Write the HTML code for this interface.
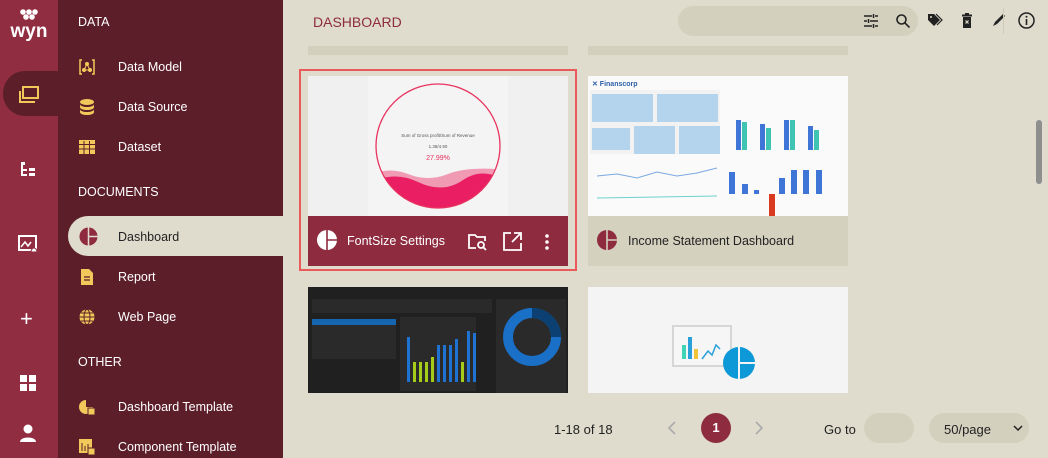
<!DOCTYPE html>
<html><head><meta charset="utf-8"><style>
*{margin:0;padding:0;box-sizing:border-box}
body{width:1048px;height:458px;overflow:hidden;background:#dfdccd;font-family:"Liberation Sans",sans-serif;position:relative}
.rail{position:absolute;left:0;top:0;width:58px;height:458px;background:#912d41}
.side{position:absolute;left:58px;top:0;width:225px;height:458px;background:#5c1f2a;color:#fff}
.sel{position:absolute;left:3px;top:71px;width:60px;height:45px;background:#5c1f2a;border-radius:22px 0 0 22px}
.hd{position:absolute;left:20px;font-size:12.5px;color:#fff}
.it{position:absolute;left:60px;font-size:12.5px;color:#fff}
.ic{position:absolute;left:20px;width:18px;height:18px}
.pill{position:absolute;left:68px;top:216px;width:215px;height:40px;background:#dfdccd;border-radius:20px 0 0 20px}
.abs{position:absolute}
</style></head><body>
<div class="rail">
 <svg class="abs" style="left:6px;top:8px" width="46" height="34" viewBox="0 0 46 34">
  <g fill="#fff"><circle cx="17" cy="4" r="2.8"/><circle cx="23" cy="4" r="2.8"/><circle cx="29" cy="4" r="2.8"/><circle cx="20" cy="9" r="2.8"/><circle cx="26" cy="9" r="2.8"/></g>
  <text x="23" y="29" text-anchor="middle" font-family="Liberation Sans" font-weight="bold" font-size="19" fill="#fff">wyn</text>
 </svg>
</div>
<div class="sel"></div>
<svg class="abs" style="left:18px;top:86px" width="22" height="18" viewBox="0 0 22 18"><rect x="5" y="1" width="15" height="11" fill="none" stroke="#f1c95b" stroke-width="2"/><path d="M2 5v11h15" fill="none" stroke="#f1c95b" stroke-width="2"/></svg>
<svg class="abs" style="left:21px;top:162px" width="16" height="16" viewBox="0 0 16 16" fill="#fff"><rect x="0" y="0" width="4" height="3"/><rect x="0" y="3" width="2" height="11"/><rect x="2" y="7" width="4" height="2"/><rect x="2" y="12" width="4" height="2"/><rect x="8" y="6" width="6" height="3"/><rect x="8" y="11" width="6" height="3"/></svg>
<svg class="abs" style="left:18px;top:235px" width="22" height="20" viewBox="0 0 22 20"><rect x="1" y="1" width="17" height="14" fill="none" stroke="#fff" stroke-width="2"/><path d="M3 12l4-5 3 4 3-4" fill="none" stroke="#fff" stroke-width="1.5"/><path d="M13 17a3 4 0 0 1 6 0z" fill="#fff" stroke="#912d41"/></svg>
<div class="abs" style="left:20px;top:307px;color:#fff;font-size:22px;line-height:24px">+</div>
<svg class="abs" style="left:20px;top:375px" width="16" height="16"><rect x="0" y="0" width="7" height="7" fill="#fff"/><rect x="9" y="0" width="7" height="7" fill="#fff"/><rect x="0" y="9" width="7" height="7" fill="#fff"/><rect x="9" y="9" width="7" height="7" fill="#fff"/></svg>
<svg class="abs" style="left:19px;top:424px" width="18" height="20"><circle cx="9" cy="5" r="4.5" fill="#fff"/><path d="M1 18c0-6 16-6 16 0z" fill="#fff"/></svg>

<div class="side">
 <div class="hd" style="top:15px">DATA</div>
 <div class="it" style="top:60px">Data Model</div>
 <div class="it" style="top:100px">Data Source</div>
 <div class="it" style="top:140px">Dataset</div>
 <div class="hd" style="top:185px">DOCUMENTS</div>
 <div class="it" style="top:270px">Report</div>
 <div class="it" style="top:310px">Web Page</div>
 <div class="hd" style="top:355px">OTHER</div>
 <div class="it" style="top:400px">Dashboard Template</div>
 <div class="it" style="top:440px">Component Template</div>
 <svg class="ic" style="top:58px" viewBox="0 0 18 18"><path d="M4 2H2v14h2M14 2h2v14h-2" fill="none" stroke="#f1c95b" stroke-width="1.5"/><circle cx="9" cy="6" r="2" fill="#f1c95b"/><circle cx="6" cy="12" r="2" fill="#f1c95b"/><circle cx="12" cy="12" r="2" fill="#f1c95b"/><path d="M9 6L6 12h6z" fill="none" stroke="#f1c95b"/></svg>
 <svg class="ic" style="top:98px" viewBox="0 0 18 18" fill="#f1c95b"><ellipse cx="9" cy="4" rx="7" ry="3"/><path d="M2 6c0 4 14 4 14 0v3c0 4-14 4-14 0zM2 11c0 4 14 4 14 0v3c0 4-14 4-14 0z"/></svg>
 <svg class="ic" style="top:138px" viewBox="0 0 18 18"><rect x="1" y="2" width="16" height="14" fill="#f1c95b"/><g stroke="#5c1f2a" stroke-width="1"><path d="M1 6.5h16M1 11h16M6 3v13M11.5 3v13"/></g></svg>
 <svg class="ic" style="top:268px" viewBox="0 0 18 18"><path d="M3 1h8l4 4v12H3z" fill="#f1c95b"/><path d="M6 9h6M6 12h6" stroke="#5c1f2a" stroke-width="1.3"/></svg>
 <svg class="ic" style="top:308px" viewBox="0 0 18 18"><circle cx="9" cy="9" r="7.5" fill="#f1c95b"/><g fill="none" stroke="#5c1f2a" stroke-width="1"><ellipse cx="9" cy="9" rx="3" ry="7.5"/><path d="M1.5 9h15M3 5h12M3 13h12"/></g></svg>
 <svg class="ic" style="top:398px" viewBox="0 0 18 18"><path d="M8 2a7 7 0 1 0 7 7H8z" fill="#f1c95b"/><rect x="10" y="10" width="7" height="7" fill="#f1c95b" stroke="#5c1f2a"/></svg>
 <svg class="ic" style="top:438px" viewBox="0 0 18 18"><rect x="1" y="1" width="13" height="14" fill="#f1c95b"/><path d="M4 5v8M7 8v5M10 6v7" stroke="#5c1f2a"/><rect x="10" y="10" width="7" height="7" fill="#f1c95b" stroke="#5c1f2a"/></svg>
</div>
<div class="pill"></div>
<svg class="abs" style="left:79px;top:227px" width="19" height="19" viewBox="0 0 20 20"><circle cx="10" cy="10" r="9.5" fill="#8e2b3f"/><path d="M10 0v20M10 10h10" stroke="#dfdccd" stroke-width="1.6"/></svg>
<div class="abs" style="left:118px;top:230px;font-size:12.5px;color:#222">Dashboard</div>

<!-- main -->
<div class="abs" style="left:313px;top:14px;font-size:14px;color:#8e2b3f">DASHBOARD</div>
<div class="abs" style="left:678px;top:6px;width:240px;height:30px;background:#d4d0be;border-radius:15px"></div>
<svg class="abs" style="left:864px;top:14px" width="14" height="14" viewBox="0 0 14 14" stroke="#222" stroke-width="1.5"><path d="M0 2h8M11 2h3M0 7h3M6 7h8M0 12h8M11 12h3M9.5 0v4M4.5 5v4M9.5 10v4"/></svg>
<svg class="abs" style="left:896px;top:14px" width="14" height="14" viewBox="0 0 14 14" fill="none" stroke="#222" stroke-width="1.6"><circle cx="5.5" cy="5.5" r="4.5"/><path d="M9 9l4.5 4.5"/></svg>
<svg class="abs" style="left:927px;top:13px" width="16" height="14" viewBox="0 0 16 14"><path d="M1 1h6l6 6-6 6-6-6z" fill="#222"/><path d="M9 1l6 6-5 5" fill="none" stroke="#222" stroke-width="1.2"/><circle cx="4" cy="4" r="1" fill="#dfdccd"/></svg>
<svg class="abs" style="left:961px;top:13px" width="12" height="15" viewBox="0 0 12 15"><rect x="1" y="1.5" width="10" height="2" fill="#222"/><rect x="4" y="0" width="4" height="2" fill="#222"/><rect x="2" y="4" width="8" height="11" fill="#222"/><path d="M4.5 7.5l3 3M7.5 7.5l-3 3" stroke="#dfdccd" stroke-width="1.2"/></svg>
<svg class="abs" style="left:992px;top:13px" width="14" height="14"><path d="M1 13l2-4 8-8 2 2-8 8z" fill="#222"/></svg>
<div class="abs" style="left:1003px;top:8px;width:1px;height:26px;background:#cfcbb9"></div>
<svg class="abs" style="left:1018px;top:12px" width="17" height="17" viewBox="0 0 17 17"><circle cx="8.5" cy="8.5" r="7.5" fill="none" stroke="#222" stroke-width="1.5"/><rect x="7.7" y="7" width="1.6" height="6" fill="#222"/><circle cx="8.5" cy="4.8" r="1" fill="#222"/></svg>

<div class="abs" style="left:308px;top:46px;width:260px;height:9px;background:#d4d0be"></div>
<div class="abs" style="left:588px;top:46px;width:260px;height:9px;background:#d4d0be"></div>

<!-- card 1 -->
<div class="abs" style="left:299px;top:69px;width:278px;height:202px;border:2px solid #ea5a5a"></div>
<div class="abs" style="left:308px;top:76px;width:260px;height:140px;background:#f0f0f0;overflow:hidden">
 <div class="abs" style="left:60px;top:0;width:140px;height:140px;background:#f4f4f4"></div>
 <svg class="abs" style="left:60px;top:0" width="140" height="140" viewBox="0 0 140 140">
  <defs><clipPath id="c"><circle cx="70" cy="70" r="62"/></clipPath></defs>
  <g clip-path="url(#c)"><path d="M0 100q20-10 40-2t40 0 60-4v60H0z" fill="#f19ab4"/><path d="M0 108q25-14 50-2t45-2 45 2v60H0z" fill="#e91e63"/></g>
  <circle cx="70" cy="70" r="62" fill="none" stroke="#e8325f" stroke-width="1.3"/>
  <text x="70" y="61" font-size="4.5" text-anchor="middle" fill="#555">Sum of Gross profit/Sum of Revenue</text>
  <text x="70" y="72" font-size="4.5" text-anchor="middle" fill="#555">1.38/4.90</text>
  <text x="70" y="84" font-size="7" text-anchor="middle" fill="#e8325f">27.99%</text>
 </svg>
</div>
<div class="abs" style="left:308px;top:216px;width:260px;height:50px;background:#8e2b3f"></div>
<svg class="abs" style="left:317px;top:230px" width="20" height="20" viewBox="0 0 20 20"><circle cx="10" cy="10" r="10" fill="#fff"/><path d="M10 0v20M10 10h10" stroke="#8e2b3f" stroke-width="1.6"/></svg>
<div class="abs" style="left:347px;top:234px;font-size:12.5px;color:#fff">FontSize Settings</div>
<svg class="abs" style="left:468px;top:233px" width="20" height="18" viewBox="0 0 20 18" fill="none" stroke="#fff" stroke-width="1.8"><path d="M8 15H1V2h6l2 2h8v4"/><circle cx="13" cy="12" r="3"/><path d="M15 14l3 3"/></svg>
<svg class="abs" style="left:503px;top:232px" width="19" height="19" viewBox="0 0 19 19" fill="none" stroke="#fff" stroke-width="1.8"><path d="M8 1H1v17h17v-7"/><path d="M11 1h7v7M18 1l-9 9"/></svg>
<svg class="abs" style="left:544px;top:234px" width="6" height="16"><circle cx="3" cy="2" r="1.8" fill="#fff"/><circle cx="3" cy="8" r="1.8" fill="#fff"/><circle cx="3" cy="14" r="1.8" fill="#fff"/></svg>

<!-- card 2 -->
<div class="abs" style="left:588px;top:76px;width:260px;height:140px;background:#fafafa;overflow:hidden">
 <div class="abs" style="left:4px;top:4px;font-size:7px;color:#2d5fa8;font-weight:bold">✕ Finanscorp</div>
 <div class="abs" style="left:2px;top:14px;width:130px;height:64px;background:#f2f2f2"></div>
 <div class="abs" style="left:4px;top:18px;width:61px;height:28px;background:#b4d4ee"></div>
 <div class="abs" style="left:69px;top:18px;width:61px;height:28px;background:#b4d4ee"></div>
 <div class="abs" style="left:4px;top:52px;width:38px;height:22px;background:#b4d4ee"></div>
 <div class="abs" style="left:46px;top:50px;width:41px;height:28px;background:#b4d4ee"></div>
 <div class="abs" style="left:91px;top:50px;width:41px;height:28px;background:#b4d4ee"></div>
 <svg class="abs" style="left:136px;top:14px" width="122" height="126">
  <g fill="#3f75d6"><rect x="12" y="30" width="5" height="30"/><rect x="36" y="34" width="5" height="26"/><rect x="60" y="30" width="5" height="30"/><rect x="84" y="36" width="5" height="24"/>
  <rect x="5" y="82" width="6" height="22"/><rect x="18" y="94" width="6" height="10"/><rect x="30" y="100" width="5" height="4"/><rect x="55" y="88" width="6" height="16"/><rect x="67" y="80" width="6" height="24"/><rect x="79" y="80" width="6" height="24"/><rect x="92" y="80" width="6" height="24"/></g>
  <g fill="#3fc3b3"><rect x="18" y="32" width="5" height="28"/><rect x="42" y="38" width="5" height="22"/><rect x="66" y="30" width="5" height="30"/><rect x="90" y="40" width="5" height="20"/></g>
  <rect x="45" y="104" width="6" height="22" fill="#d93a1f"/>
 </svg>
 <svg class="abs" style="left:4px;top:82px" width="130" height="56"><polyline points="5,18 25,16 45,20 65,14 85,18 105,15 125,10" fill="none" stroke="#7aa8e0"/><polyline points="5,40 125,38" fill="none" stroke="#6dd0d0"/></svg>
</div>
<div class="abs" style="left:588px;top:216px;width:260px;height:50px;background:#d5d1bf"></div>
<svg class="abs" style="left:597px;top:230px" width="20" height="20" viewBox="0 0 20 20"><circle cx="10" cy="10" r="10" fill="#8e2b3f"/><path d="M10 0v20M10 10h10" stroke="#d5d1bf" stroke-width="1.6"/></svg>
<div class="abs" style="left:628px;top:234px;font-size:12.5px;color:#222">Income Statement Dashboard</div>

<!-- row 2 -->
<div class="abs" style="left:308px;top:287px;width:260px;height:106px;background:#202020;overflow:hidden">
 <div class="abs" style="left:4px;top:12px;width:180px;height:14px;background:#2a2a2a"></div>
 <div class="abs" style="left:4px;top:32px;width:84px;height:40px;background:#2a2a2a;border-top:6px solid #1565b0"></div>
 <div class="abs" style="left:92px;top:30px;width:76px;height:74px;background:#2a2a2a"></div>
 <svg class="abs" style="left:95px;top:40px" width="75" height="60"><g fill="#1e73d2"><rect x="4" y="10" width="3" height="45"/><rect x="34" y="18" width="3" height="37"/><rect x="40" y="18" width="3" height="37"/><rect x="46" y="18" width="3" height="37"/><rect x="52" y="12" width="3" height="43"/><rect x="64" y="4" width="3" height="51"/><rect x="70" y="6" width="3" height="49"/></g><g fill="#a5cc18"><rect x="10" y="35" width="3" height="20"/><rect x="16" y="35" width="3" height="20"/><rect x="22" y="35" width="3" height="20"/><rect x="28" y="30" width="3" height="25"/><rect x="58" y="35" width="3" height="20"/></g></svg>
 <div class="abs" style="left:188px;top:12px;width:70px;height:94px;background:#2a2a2a"></div>
 <svg class="abs" style="left:192px;top:18px" width="64" height="64"><circle cx="32" cy="32" r="24" fill="none" stroke="#1a6fc7" stroke-width="10"/><path d="M32 8a24 24 0 0 1 24 24" fill="none" stroke="#0c3f72" stroke-width="10"/></svg>
</div>
<div class="abs" style="left:588px;top:287px;width:260px;height:106px;background:#f4f4f4"></div>
<svg class="abs" style="left:672px;top:325px" width="86" height="56" viewBox="0 0 86 56"><rect x="1" y="1" width="58" height="40" fill="#f6f6f6" stroke="#d6d6d6" stroke-width="2"/><rect x="10" y="20" width="4" height="14" fill="#3fd4b4"/><rect x="16" y="12" width="4" height="22" fill="#29a0d8"/><rect x="22" y="24" width="4" height="10" fill="#f0c437"/><polyline points="30,34 36,26 40,30 44,20 48,24" fill="none" stroke="#29a0d8" stroke-width="1.5"/><circle cx="67" cy="38" r="16" fill="#0d98d8"/><path d="M67 22v32M67 38h16" stroke="#f4f4f4" stroke-width="2"/></svg>

<div class="abs" style="left:1036px;top:120px;width:6px;height:64px;background:#8e8e8e;border-radius:3px"></div>

<!-- pagination -->
<div class="abs" style="left:554px;top:422px;font-size:13px;color:#222">1-18 of 18</div>
<svg class="abs" style="left:668px;top:421px" width="8" height="14"><path d="M7 1L1 7l6 6" fill="none" stroke="#aaa" stroke-width="1.6"/></svg>
<div class="abs" style="left:701px;top:413px;width:30px;height:30px;border-radius:50%;background:#8e2b3f;color:#fff;font-size:13px;font-weight:bold;text-align:center;line-height:30px">1</div>
<svg class="abs" style="left:755px;top:421px" width="8" height="14"><path d="M1 1l6 6-6 6" fill="none" stroke="#aaa" stroke-width="1.6"/></svg>
<div class="abs" style="left:824px;top:422px;font-size:13px;color:#222">Go to</div>
<div class="abs" style="left:864px;top:413px;width:50px;height:30px;border-radius:15px;background:#d4d0be"></div>
<div class="abs" style="left:929px;top:413px;width:100px;height:30px;border-radius:15px;background:#d4d0be"></div>
<div class="abs" style="left:944px;top:422px;font-size:13px;color:#222">50/page</div>
<svg class="abs" style="left:1013px;top:425px" width="10" height="6"><path d="M1 1l4 4 4-4" fill="none" stroke="#222" stroke-width="1.5"/></svg>
</body></html>
